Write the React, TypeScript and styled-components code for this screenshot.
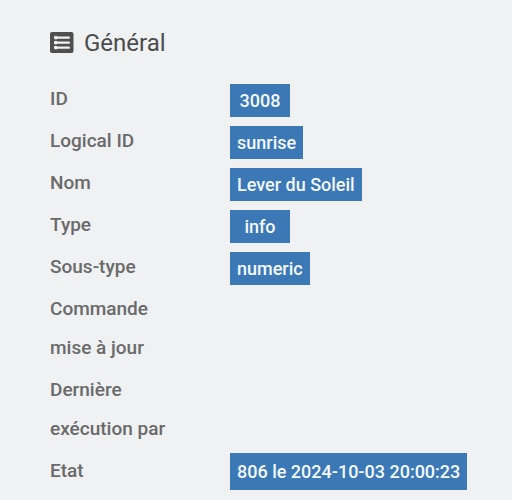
import React from "react";
import styled, { createGlobalStyle } from "styled-components";

const GlobalStyle = createGlobalStyle`
  body {
    margin: 0;
    background: #eff1f3;
    color: #6a6a6a;
    font-family: Roboto, "Liberation Sans", sans-serif;
  }
`;

const Panel = styled.section`
  padding: 24px 20px 0 50px;
`;

const Heading = styled.h1`
  display: flex;
  align-items: center;
  gap: 10px;
  margin: 0 0 17px;
  color: #4c4c4c;
  font-size: 24px;
  font-weight: 400;
  line-height: 38px;
`;

const Properties = styled.dl`
  display: grid;
  gap: 3px;
  margin: 0;
`;

const Row = styled.div`
  display: grid;
  grid-template-columns: 130px 1fr;
  column-gap: 50px;
  align-items: start;
`;

const Term = styled.dt`
  font-size: 19px;
  font-weight: 500;
  line-height: 39px;
`;

const Value = styled.dd<{ $tall?: boolean }>`
  display: flex;
  margin: ${({ $tall }) => ($tall ? "2px 0 0" : "5px 0 0")};
`;

const Badge = styled.span<{ $tall?: boolean }>`
  box-sizing: border-box;
  min-width: 60px;
  padding: 0 7px;
  background: #3b78b5;
  color: #f4f9fd;
  font-size: 18px;
  font-weight: 500;
  line-height: ${({ $tall }) => ($tall ? "37px" : "33px")};
  text-align: center;
  white-space: nowrap;
`;

const ListIcon = () => (
  <svg width="24" height="22" viewBox="0 0 24 22" aria-hidden="true">
    <rect width="23.5" height="21" rx="2" fill="#4f4f4f" />
    <g fill="#f1f2f3">
      <circle cx="5.8" cy="5.6" r="1.9" />
      <circle cx="5.8" cy="10.6" r="1.9" />
      <circle cx="5.8" cy="15.6" r="1.9" />
      <rect x="7" y="4.4" width="12.8" height="2.4" rx="0.5" />
      <rect x="7" y="9.4" width="12.8" height="2.4" rx="0.5" />
      <rect x="7" y="14.4" width="12.8" height="2.4" rx="0.5" />
    </g>
  </svg>
);

type Property = { label: string; value?: string; tall?: boolean };

const properties: Property[] = [
  { label: "ID", value: "3008" },
  { label: "Logical ID", value: "sunrise" },
  { label: "Nom", value: "Lever du Soleil" },
  { label: "Type", value: "info" },
  { label: "Sous-type", value: "numeric" },
  { label: "Commande mise à jour" },
  { label: "Dernière exécution par" },
  { label: "Etat", value: "806 le 2024-10-03 20:00:23", tall: true },
];

export default function App() {
  return (
    <>
      <GlobalStyle />
      <Panel>
        <Heading>
          <ListIcon />
          Général
        </Heading>
        <Properties>
          {properties.map(({ label, value, tall }) => (
            <Row key={label}>
              <Term>{label}</Term>
              <Value $tall={tall}>
                {value && <Badge $tall={tall}>{value}</Badge>}
              </Value>
            </Row>
          ))}
        </Properties>
      </Panel>
    </>
  );
}
